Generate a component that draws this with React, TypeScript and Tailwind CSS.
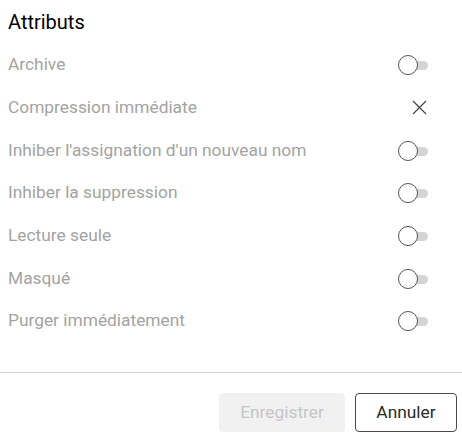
import { Fragment } from "react";

// Attribute list shown in the dialog
const ATTRIBUTES = [
  { id: "archive", label: "Archive", kind: "toggle" as const },
  { id: "compress", label: "Compression immédiate", kind: "cross" as const },
  { id: "rename", label: "Inhiber l'assignation d'un nouveau nom", kind: "toggle" as const },
  { id: "delete", label: "Inhiber la suppression", kind: "toggle" as const },
  { id: "readonly", label: "Lecture seule", kind: "toggle" as const },
  { id: "hidden", label: "Masqué", kind: "toggle" as const },
  { id: "purge", label: "Purger immédiatement", kind: "toggle" as const },
];

function Toggle() {
  return (
    <div className="relative h-[20px] w-[30px]">
      <div className="absolute right-0 top-[6px] h-[9px] w-[21px] rounded-full bg-[#d4d4d4]" />
      <div className="absolute left-0 top-0 h-[20px] w-[20px] rounded-full border border-[#555] bg-white" />
    </div>
  );
}

function Cross() {
  return (
    <svg width="15" height="15" viewBox="0 0 15 15" className="mr-[1px]">
      <path d="M1 1 L14 14 M14 1 L1 14" stroke="#444" strokeWidth="1.2" fill="none" />
    </svg>
  );
}

export default function App() {
  return (
    <div
      className="flex h-[440px] w-[462px] flex-col bg-white"
      style={{ fontFamily: "Roboto, 'Liberation Sans', sans-serif" }}
    >
      {/* Title */}
      <h2 className="mt-[10px] pl-[8px] text-[20px] leading-[24px] font-normal text-black">
        Attributs
      </h2>

      {/* Attribute rows */}
      <div className="mt-[10px] flex flex-col">
        {ATTRIBUTES.map((attr) => (
          <Fragment key={attr.id}>
            <div className="flex h-[42.67px] items-center justify-between pl-[8px] pr-[34px]">
              <span className="text-[17.33px] text-[#a3a3a3]">{attr.label}</span>
              <div className="flex w-[30px] justify-end">
                {attr.kind === "toggle" ? <Toggle /> : <Cross />}
              </div>
            </div>
          </Fragment>
        ))}
      </div>

      {/* Footer */}
      <div className="mt-auto">
        <div className="h-px bg-[#d0d0d0]" />
        <div className="flex justify-end gap-[10px] pb-[8px] pr-[5px] pt-[20px]">
          <button className="h-[39px] w-[126px] rounded-[4px] bg-[#f1f1f1] text-[17.33px] text-[#c6c6c6]">
            Enregistrer
          </button>
          <button className="h-[39px] w-[102px] rounded-[4px] border border-[#4a4a4a] bg-white text-[17.33px] text-[#2a2a2a]">
            Annuler
          </button>
        </div>
      </div>
    </div>
  );
}
